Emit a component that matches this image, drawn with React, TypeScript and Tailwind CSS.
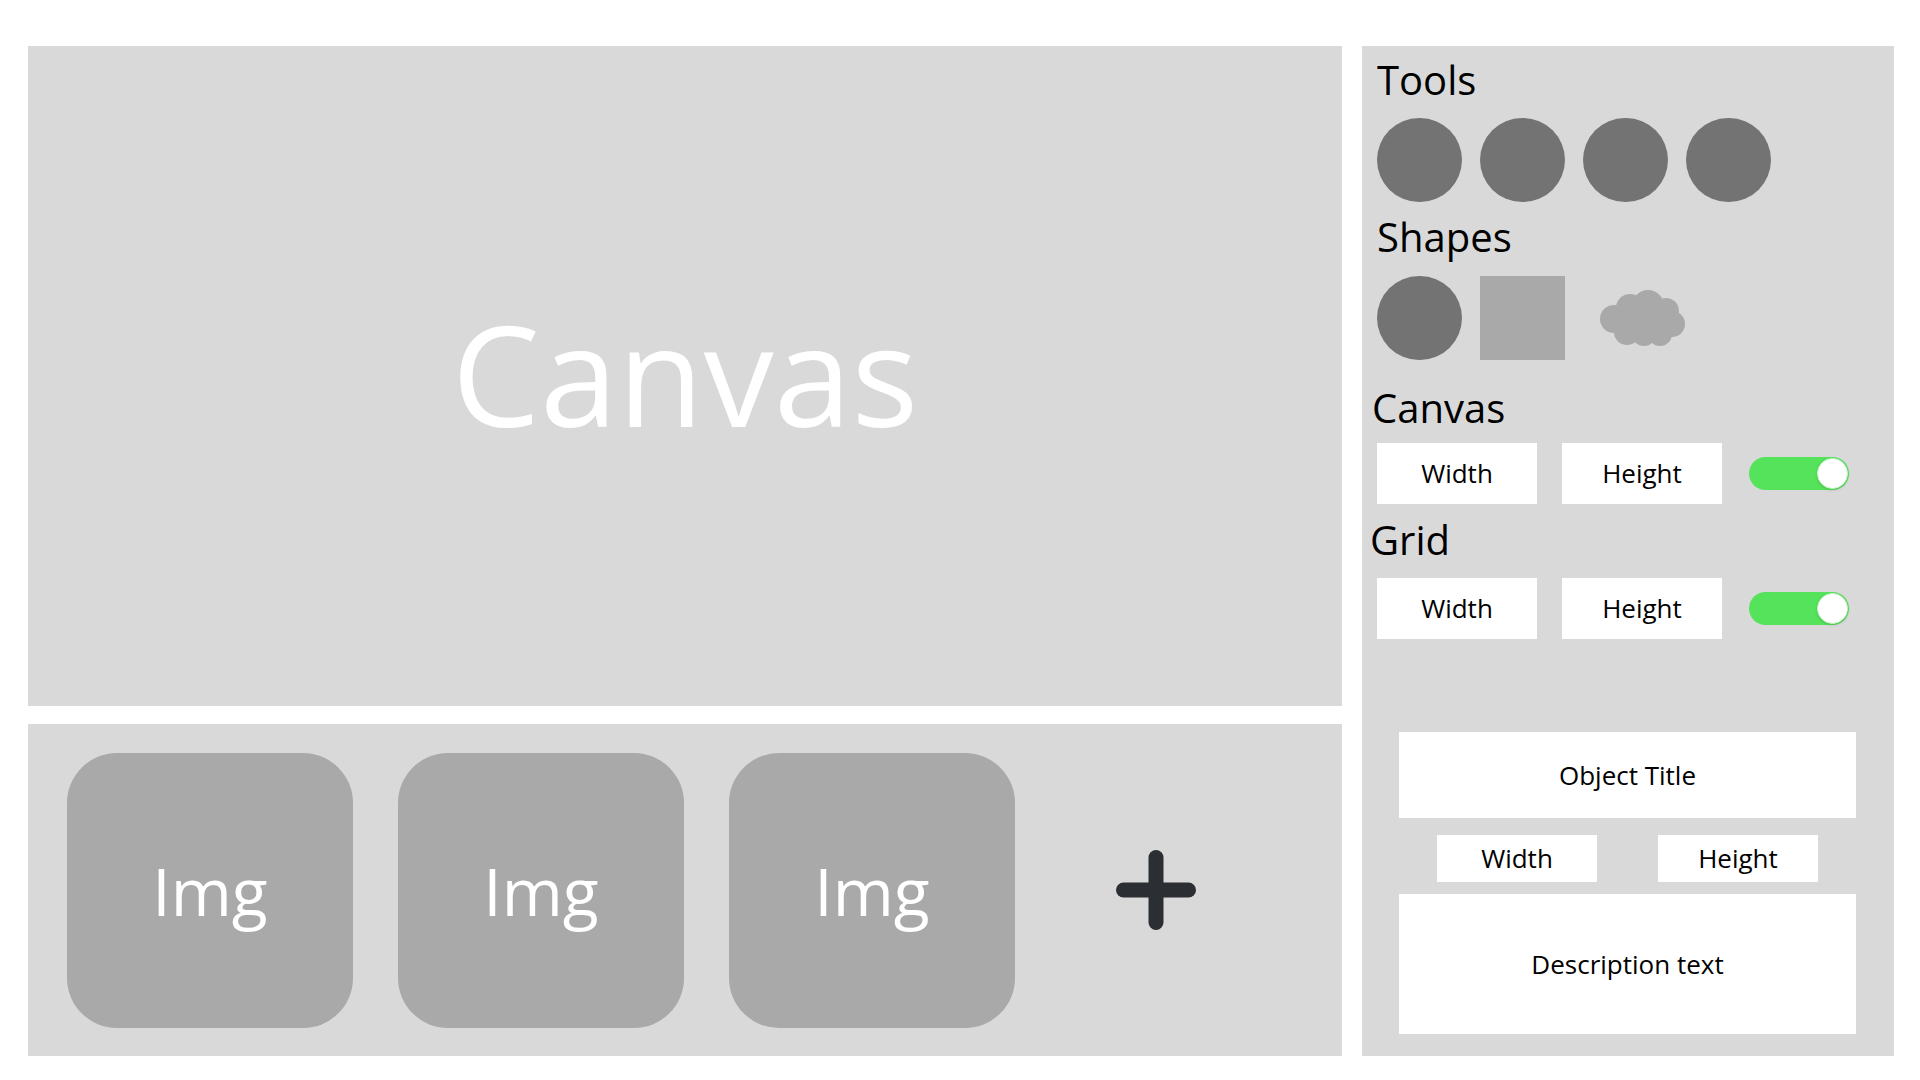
const FONT = "font-['Open_Sans','Liberation_Sans',sans-serif]";

function Field({ label, className = "" }: { label: string; className?: string }) {
  return (
    <div className={`flex items-center justify-center bg-white text-[26px] text-black ${className}`}>
      {label}
    </div>
  );
}

function Toggle() {
  return (
    <div className="flex h-[33px] w-[100px] items-center justify-end rounded-full bg-[#55e35b] pr-[1px]">
      <div className="h-[31px] w-[31px] rounded-full border border-[#c8f5c9] bg-white shadow-[0_1px_3px_rgba(0,0,0,0.15)]" />
    </div>
  );
}

function Cloud() {
  return (
    <svg width="85" height="56" viewBox="0 0 85 56" className="mt-[14px] ml-[17px]">
      <g fill="#a9a9a9">
        <circle cx="14" cy="29" r="14" />
        <circle cx="30" cy="18" r="14" />
        <circle cx="48" cy="16" r="16" />
        <circle cx="66" cy="21" r="13" />
        <circle cx="72" cy="34" r="13" />
        <circle cx="60" cy="44" r="12" />
        <circle cx="44" cy="44" r="12" />
        <circle cx="27" cy="42" r="13" />
        <ellipse cx="42" cy="30" rx="28" ry="18" />
      </g>
    </svg>
  );
}

function ImgCard() {
  return (
    <div className="flex h-[275px] w-[286px] items-center justify-center rounded-[50px] bg-[#a9a9a9] text-[66px] text-white">
      Img
    </div>
  );
}

export default function App() {
  return (
    <div className={`flex h-[1080px] w-[1920px] bg-white pl-[28px] pt-[46px] ${FONT}`}>
      {/* left column */}
      <div className="flex w-[1314px] flex-col gap-[18px]">
        <div className="flex h-[660px] items-center justify-center bg-[#d9d9d9] pb-[6px] text-[140px] text-white">
          Canvas
        </div>
        <div className="flex h-[332px] items-center bg-[#d9d9d9] pl-[39px]">
          <div className="flex gap-[45px]">
            <ImgCard />
            <ImgCard />
            <ImgCard />
          </div>
          <svg width="80" height="80" viewBox="0 0 80 80" className="ml-[101px]">
            <g stroke="#2b2f33" strokeWidth="15" strokeLinecap="round">
              <line x1="7.5" y1="40" x2="72.5" y2="40" />
              <line x1="40" y1="7.5" x2="40" y2="72.5" />
            </g>
          </svg>
        </div>
      </div>

      {/* right panel */}
      <div className="ml-[20px] flex h-[1010px] w-[532px] flex-col bg-[#d9d9d9] pl-[15px] pt-[14px] text-black">
        <div className="text-[40px] leading-[40px]">Tools</div>
        <div className="mt-[18px] flex gap-[18px]">
          {[0, 1, 2, 3].map((i) => (
            <div key={i} className="h-[84px] w-[85px] rounded-full bg-[#737373]" />
          ))}
        </div>

        <div className="mt-[15px] text-[40px] leading-[40px]">Shapes</div>
        <div className="mt-[19px] flex items-start gap-[18px]">
          <div className="h-[84px] w-[85px] rounded-full bg-[#737373]" />
          <div className="h-[84px] w-[85px] bg-[#a9a9a9]" />
          <Cloud />
        </div>

        <div className="ml-[-5px] mt-[28px] text-[40px] leading-[40px]">Canvas</div>
        <div className="mt-[15px] flex items-center gap-[25px]">
          <Field label="Width" className="h-[61px] w-[160px]" />
          <Field label="Height" className="h-[61px] w-[160px]" />
          <div className="ml-[2px]">
            <Toggle />
          </div>
        </div>

        <div className="ml-[-7px] mt-[16px] text-[40px] leading-[40px]">Grid</div>
        <div className="mt-[18px] flex items-center gap-[25px]">
          <Field label="Width" className="h-[61px] w-[160px]" />
          <Field label="Height" className="h-[61px] w-[160px]" />
          <div className="ml-[2px]">
            <Toggle />
          </div>
        </div>

        {/* object properties */}
        <div className="ml-[22px] mt-[93px] flex w-[457px] flex-col">
          <Field label="Object Title" className="h-[86px] w-full" />
          <div className="mt-[17px] flex justify-center gap-[61px]">
            <Field label="Width" className="h-[47px] w-[160px]" />
            <Field label="Height" className="h-[47px] w-[160px]" />
          </div>
          <Field label="Description text" className="mt-[12px] h-[140px] w-full" />
        </div>
      </div>
    </div>
  );
}
